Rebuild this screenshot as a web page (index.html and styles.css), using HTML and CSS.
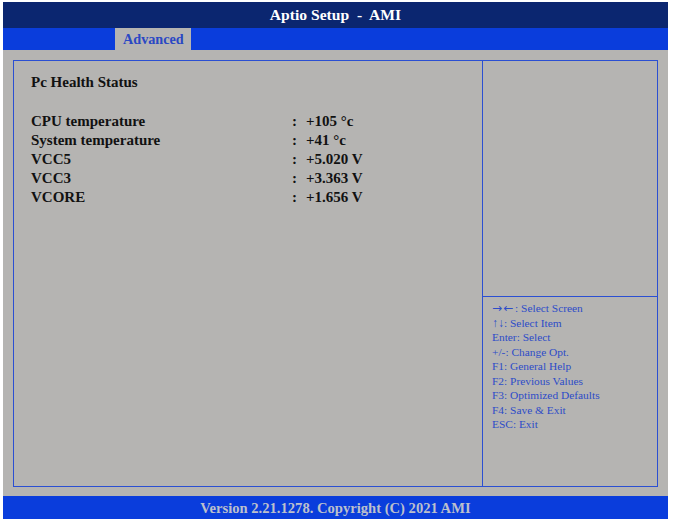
FILE: index.html
```html
<!DOCTYPE html>
<html>
<head>
<meta charset="utf-8">
<link rel="stylesheet" href="styles.css">
</head>
<body>
<div class="screen">
  <div class="titlebar">Aptio Setup&nbsp; -&nbsp; AMI</div>
  <div class="tabbar"><span class="tab">Advanced</span></div>
  <div class="body">
    <div class="panel">
      <div class="main">
        <div class="heading">Pc Health Status</div>
        <div class="rows">
          <div class="row"><span class="label">CPU temperature</span><span class="colon">:</span><span class="value">+105 °c</span></div>
          <div class="row"><span class="label">System temperature</span><span class="colon">:</span><span class="value">+41 °c</span></div>
          <div class="row"><span class="label">VCC5</span><span class="colon">:</span><span class="value">+5.020 V</span></div>
          <div class="row"><span class="label">VCC3</span><span class="colon">:</span><span class="value">+3.363 V</span></div>
          <div class="row"><span class="label">VCORE</span><span class="colon">:</span><span class="value">+1.656 V</span></div>
        </div>
      </div>
      <div class="side">
        <div class="desc"></div>
        <div class="help">
          <div class="line"><span class="arrows">→←</span>: Select Screen</div>
          <div class="line"><span class="updown">↑↓</span>: Select Item</div>
          <div class="line">Enter: Select</div>
          <div class="line">+/-: Change Opt.</div>
          <div class="line">F1: General Help</div>
          <div class="line">F2: Previous Values</div>
          <div class="line">F3: Optimized Defaults</div>
          <div class="line">F4: Save &amp; Exit</div>
          <div class="line">ESC: Exit</div>
        </div>
      </div>
    </div>
  </div>
  <div class="footer">Version 2.21.1278. Copyright (C) 2021 AMI</div>
</div>
</body>
</html>
```
FILE: styles.css
```css
html, body {
  margin: 0;
  padding: 0;
  background: #ffffff;
}
body {
  width: 673px;
  height: 524px;
  font-family: "Liberation Serif", "Times New Roman", serif;
}
.screen {
  margin: 2px 5px 0 3px;
  width: 665px;
  display: flex;
  flex-direction: column;
}
.titlebar {
  height: 26px;
  background: #0b2670;
  color: #ffffff;
  font-weight: bold;
  font-size: 15.6px;
  line-height: 26px;
  text-align: center;
}
.tabbar {
  height: 22px;
  background: #0a3ddc;
  display: flex;
  padding-left: 112px;
}
.tab {
  background: #b5b4b2;
  color: #2a48c4;
  font-weight: bold;
  font-size: 14.2px;
  line-height: 22px;
  padding: 0 7px 0 8px;
}
.body {
  background: #b5b4b2;
  height: 446px;
  padding: 10px 0 0 10px;
  box-sizing: border-box;
}
.panel {
  width: 645px;
  height: 427px;
  box-sizing: border-box;
  border: 1.5px solid #2b4fd2;
  display: flex;
}
.main {
  width: 469px;
  box-sizing: border-box;
  border-right: 1.5px solid #2b4fd2;
  padding: 13px 0 0 17px;
}
.heading {
  font-weight: bold;
  font-size: 15px;
  color: #111;
  line-height: 17px;
}
.rows {
  margin-top: 21px;
}
.row {
  display: flex;
  font-weight: bold;
  font-size: 15px;
  color: #111;
  line-height: 19px;
}
.label {
  width: 261px;
}
.colon {
  width: 14px;
}
.side {
  flex: 1;
  display: flex;
  flex-direction: column;
}
.desc {
  height: 235px;
  border-bottom: 1.5px solid #2b4fd2;
}
.help {
  padding: 4px 0 0 9px;
  color: #2d4cc8;
  font-size: 11.4px;
  line-height: 14.5px;
}
.line {
  height: 14.5px;
  white-space: nowrap;
}
.arrows {
  font-family: "DejaVu Sans", sans-serif;
  font-size: 12px;
  line-height: 0;
  letter-spacing: 1.5px;
}
.updown {
  font-size: 12px;
  line-height: 0;
}
.footer {
  height: 23px;
  background: #0a3ddc;
  color: #bcc0cc;
  font-weight: bold;
  font-size: 14.6px;
  line-height: 24px;
  text-align: center;
}
```
